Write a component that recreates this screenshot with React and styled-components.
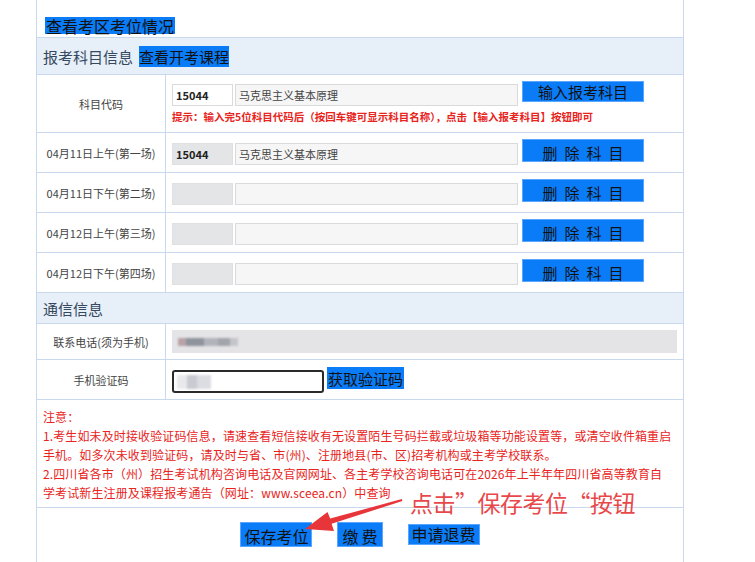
import React from 'react';
import styled, { createGlobalStyle } from 'styled-components';

const FONT = `"Noto Sans CJK SC", "Noto Sans", "Liberation Sans", sans-serif`;
const BLUE = '#0a7cf8';
const LINE = '#cad8ee';
const RED = '#e8241c';

const Global = createGlobalStyle`
  html, body { margin: 0; padding: 0; background: #fff; }
  body { font-family: ${FONT}; width: 755px; height: 562px; overflow: hidden; }
`;

const Frame = styled.div`
  position: relative;
  width: 755px;
  height: 562px;
  overflow: hidden;
`;

const Page = styled.div`
  margin-left: 36px;
  width: 648px;
  height: 562px;
  box-sizing: border-box;
  border-left: 1px solid ${LINE};
  border-right: 1px solid ${LINE};
`;

const TopBar = styled.div`
  height: 38px;
  box-sizing: border-box;
  border-bottom: 1px solid ${LINE};
  padding: 14px 0 0 8px;
`;

const Highlight = styled.span`
  display: inline-block;
  background: ${BLUE};
  color: #111;
  font-size: ${p => p.$size || 16}px;
  line-height: ${p => p.$lh || p.$h || 16}px;
  height: ${p => p.$h || 16}px;
  padding: 0 ${p => p.$pad || 0}px;
  margin-left: ${p => p.$ml || 0}px;
  white-space: nowrap;
`;

const SectionHeader = styled.div`
  height: ${p => p.$h}px;
  box-sizing: border-box;
  border-bottom: 1px solid ${LINE};
  background: #e7eff9;
  display: flex;
  align-items: center;
  gap: 6px;
  padding-left: 6px;
  font-size: 15px;
  color: #34495e;
`;

const Row = styled.div`
  display: grid;
  grid-template-columns: 129px 1fr;
  height: ${p => p.$h}px;
  box-sizing: border-box;
  border-bottom: 1px solid ${LINE};
`;

const Label = styled.div`
  border-right: 1px solid ${LINE};
  display: flex;
  align-items: center;
  justify-content: center;
  font-size: 11px;
  color: #444;
  white-space: nowrap;
`;

const Cell = styled.div`
  padding: ${p => p.$top || 0}px 0 0 6px;
  display: flex;
  flex-direction: column;
`;

const Line = styled.div`
  display: flex;
  align-items: flex-start;
`;

const Box = styled.div`
  box-sizing: border-box;
  width: ${p => p.$w}px;
  height: ${p => p.$h || 22}px;
  margin-top: ${p => p.$mt || 0}px;
  margin-left: ${p => p.$ml || 0}px;
  border: ${p => p.$bw || 1}px solid ${p => p.$border || '#dadada'};
  background: ${p => p.$bg || '#fff'};
  border-radius: ${p => p.$r || 0}px;
  display: flex;
  align-items: center;
  padding-left: 3px;
  font-size: 11px;
  color: ${p => p.$color || '#444'};
  font-weight: ${p => p.$bold ? 700 : 400};
  overflow: hidden;
  white-space: nowrap;
`;

const ActionButton = styled.div`
  box-sizing: border-box;
  width: 122px;
  height: ${p => p.$h || 21}px;
  margin-left: 4px;
  padding-left: ${p => p.$ls || 0}px;
  background: ${BLUE};
  border: 1px solid #5aa6ff;
  color: #111;
  font-size: 15px;
  line-height: ${p => p.$lh || 18}px;
  display: flex;
  align-items: flex-end;
  justify-content: center;
  letter-spacing: ${p => p.$ls || 0}px;
  overflow: hidden;
  white-space: nowrap;
`;

const Hint = styled.div`
  margin-top: 5px;
  font-size: 10.5px;
  line-height: 12px;
  font-weight: 700;
  color: ${RED};
  white-space: nowrap;
`;

const Blur = styled.div`
  display: flex;
  align-items: center;
  filter: blur(1.3px);
  margin-left: ${p => p.$ml || 0}px;
`;

const Chip = styled.span`
  display: block;
  width: ${p => p.$w}px;
  height: ${p => p.$h || 8}px;
  background: ${p => p.$c};
`;

const Notes = styled.div`
  height: 108px;
  box-sizing: border-box;
  border-bottom: 1px solid ${LINE};
  padding: 7px 0 0 6px;
  font-size: 12px;
  line-height: 19px;
  letter-spacing: 0.12px;
  color: ${RED};
  white-space: nowrap;
`;

const ButtonBar = styled.div`
  display: flex;
  justify-content: center;
  align-items: flex-start;
  gap: 25px;
  padding-top: 14px;
`;

const BottomButton = styled.div`
  box-sizing: border-box;
  height: ${p => p.$h || 25}px;
  margin-top: ${p => p.$mt || 0}px;
  padding: 0 ${p => p.$pad || 3}px 0 ${p => (p.$pad || 3) + (p.$ls || 0)}px;
  background: ${BLUE};
  border: 1px solid #5aa6ff;
  color: #111;
  font-size: 16px;
  line-height: ${p => p.$lh || 20}px;
  display: flex;
  align-items: flex-end;
  justify-content: center;
  letter-spacing: ${p => p.$ls || 0}px;
  white-space: nowrap;
`;

const Overlay = styled.svg`
  position: absolute;
  left: 0;
  top: 0;
  pointer-events: none;
`;

const Annotation = styled.div`
  position: absolute;
  left: 410px;
  top: 487px;
  font-size: 23px;
  line-height: 30px;
  color: #e8484a;
  white-space: nowrap;
  letter-spacing: -0.5px;
`;

const sessions = [
  { label: '04月11日上午(第一场)', code: '15044', name: '马克思主义基本原理' },
  { label: '04月11日下午(第二场)', code: '', name: '' },
  { label: '04月12日上午(第三场)', code: '', name: '' },
  { label: '04月12日下午(第四场)', code: '', name: '' },
];

export default function App() {
  return (
    <Frame>
      <Global />
      <Page>
        <TopBar>
          <Highlight $size={16} $h={17} $lh={18} $pad={1}>查看考区考位情况</Highlight>
        </TopBar>

        <SectionHeader $h={37}>
          <span>报考科目信息</span>
          <Highlight $size={15} $h={21} $lh={22}>查看开考课程</Highlight>
        </SectionHeader>

        <Row $h={58}>
          <Label>科目代码</Label>
          <Cell $top={6}>
            <Line>
              <Box $w={61} $mt={3} $bold $color="#222">15044</Box>
              <Box $w={283} $mt={3} $ml={2} $bg="#f6f6f6">马克思主义基本原理</Box>
              <ActionButton $h={21} $lh={18}>输入报考科目</ActionButton>
            </Line>
            <Hint>提示：输入完5位科目代码后（按回车键可显示科目名称），点击【输入报考科目】按钮即可</Hint>
          </Cell>
        </Row>

        {sessions.map(s => (
          <Row $h={40} key={s.label}>
            <Label>{s.label}</Label>
            <Cell $top={6}>
              <Line>
                <Box $w={61} $mt={4} $bg="#e4e5e7" $border="#e0e0e2" $bold $color="#222">{s.code}</Box>
                <Box $w={283} $mt={4} $ml={2} $bg="#f6f6f6">{s.name}</Box>
                <ActionButton $h={23} $lh={17} $ls={7}>删除科目</ActionButton>
              </Line>
            </Cell>
          </Row>
        ))}

        <SectionHeader $h={31}>
          <span>通信信息</span>
        </SectionHeader>

        <Row $h={36}>
          <Label>联系电话(须为手机)</Label>
          <Cell $top={6}>
            <Box $w={505} $h={23} $bg="#e4e4e6" $border="#e4e4e6">
              <Blur $ml={2}>
                <Chip $w={8} $c="#b9a3a8" />
                <Chip $w={18} $c="#8f939c" />
                <Chip $w={14} $c="#b2b4bb" />
                <Chip $w={12} $c="#a3a5ad" />
                <Chip $w={8} $c="#c4c5ca" />
              </Blur>
            </Box>
          </Cell>
        </Row>

        <Row $h={40}>
          <Label>手机验证码</Label>
          <Cell $top={7}>
            <Line>
              <Box $w={152} $h={23} $mt={3} $bw={2} $border="#2a2a2a" $r={3}>
                <Blur>
                  <Chip $w={10} $h={14} $c="#e9e9ec" />
                  <Chip $w={10} $h={14} $c="#c9cbd2" />
                  <Chip $w={14} $h={14} $c="#dcdde2" />
                </Blur>
              </Box>
              <Highlight $size={15} $h={22} $lh={24} $pad={1} $ml={3}>获取验证码</Highlight>
            </Line>
          </Cell>
        </Row>

        <Notes>
          <div>注意：</div>
          <div>1.考生如未及时接收验证码信息，请速查看短信接收有无设置陌生号码拦截或垃圾箱等功能设置等，或清空收件箱重启</div>
          <div>手机。如多次未收到验证码，请及时与省、市(州)、注册地县(市、区)招考机构或主考学校联系。</div>
          <div>2.四川省各市（州）招生考试机构咨询电话及官网网址、各主考学校咨询电话可在2026年上半年年四川省高等教育自</div>
          <div>学考试新生注册及课程报考通告（网址：www.sceea.cn）中查询</div>
        </Notes>

        <ButtonBar>
          <BottomButton $h={25} $pad={3}>保存考位</BottomButton>
          <BottomButton $h={25} $pad={1} $ls={3}>缴费</BottomButton>
          <BottomButton $h={21} $mt={2} $pad={3} $lh={19}>申请退费</BottomButton>
        </ButtonBar>
      </Page>

      <Overlay width="755" height="562" viewBox="0 0 755 562">
        <polygon
          fill="#e8353a"
          points="305,529 334,531 331.6,523.8 402.4,501 401.8,499 330.2,518.6 327.5,512"
        />
      </Overlay>
      <Annotation>点击”保存考位“按钮</Annotation>
    </Frame>
  );
}
